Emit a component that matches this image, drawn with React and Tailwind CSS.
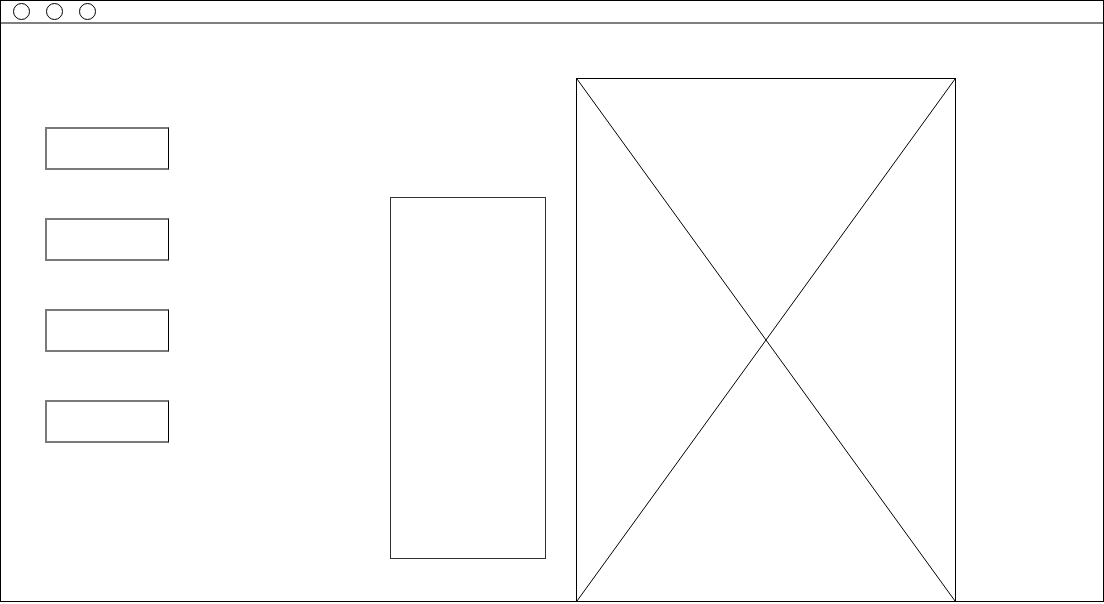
import React from "react";

const Dot = () => (
  <div className="w-[17px] h-[17px] rounded-full border border-black" />
);

const SideBox = () => (
  <div className="w-[124px] h-[43px] border-2 border-[#7a7a7a] border-r border-r-black" />
);

const App = () => {
  return (
    <div className="w-[1104px] h-[602px] bg-white border border-black flex flex-col overflow-hidden">
      {/* window bar */}
      <div className="h-[23px] shrink-0 flex items-center gap-4 pl-[12px] border-b-2 border-[#7f7f7f]">
        <Dot />
        <Dot />
        <Dot />
      </div>

      {/* content */}
      <div className="flex-1 flex items-start">
        <div className="ml-[44px] mt-[103px] flex flex-col gap-[48px]">
          <SideBox />
          <SideBox />
          <SideBox />
          <SideBox />
        </div>

        <div className="ml-[221px] mt-[173px] w-[156px] h-[362px] border border-[#333]" />

        <div className="ml-[30px] mt-[54px] w-[380px] self-stretch border border-b-0 border-black relative">
          <svg
            className="absolute inset-0 w-full h-full"
            viewBox="0 0 100 100"
            preserveAspectRatio="none"
          >
            <line x1="0" y1="0" x2="100" y2="100" stroke="black" strokeWidth="1" vectorEffect="non-scaling-stroke" />
            <line x1="100" y1="0" x2="0" y2="100" stroke="black" strokeWidth="1" vectorEffect="non-scaling-stroke" />
          </svg>
        </div>
      </div>
    </div>
  );
};

export default App;
